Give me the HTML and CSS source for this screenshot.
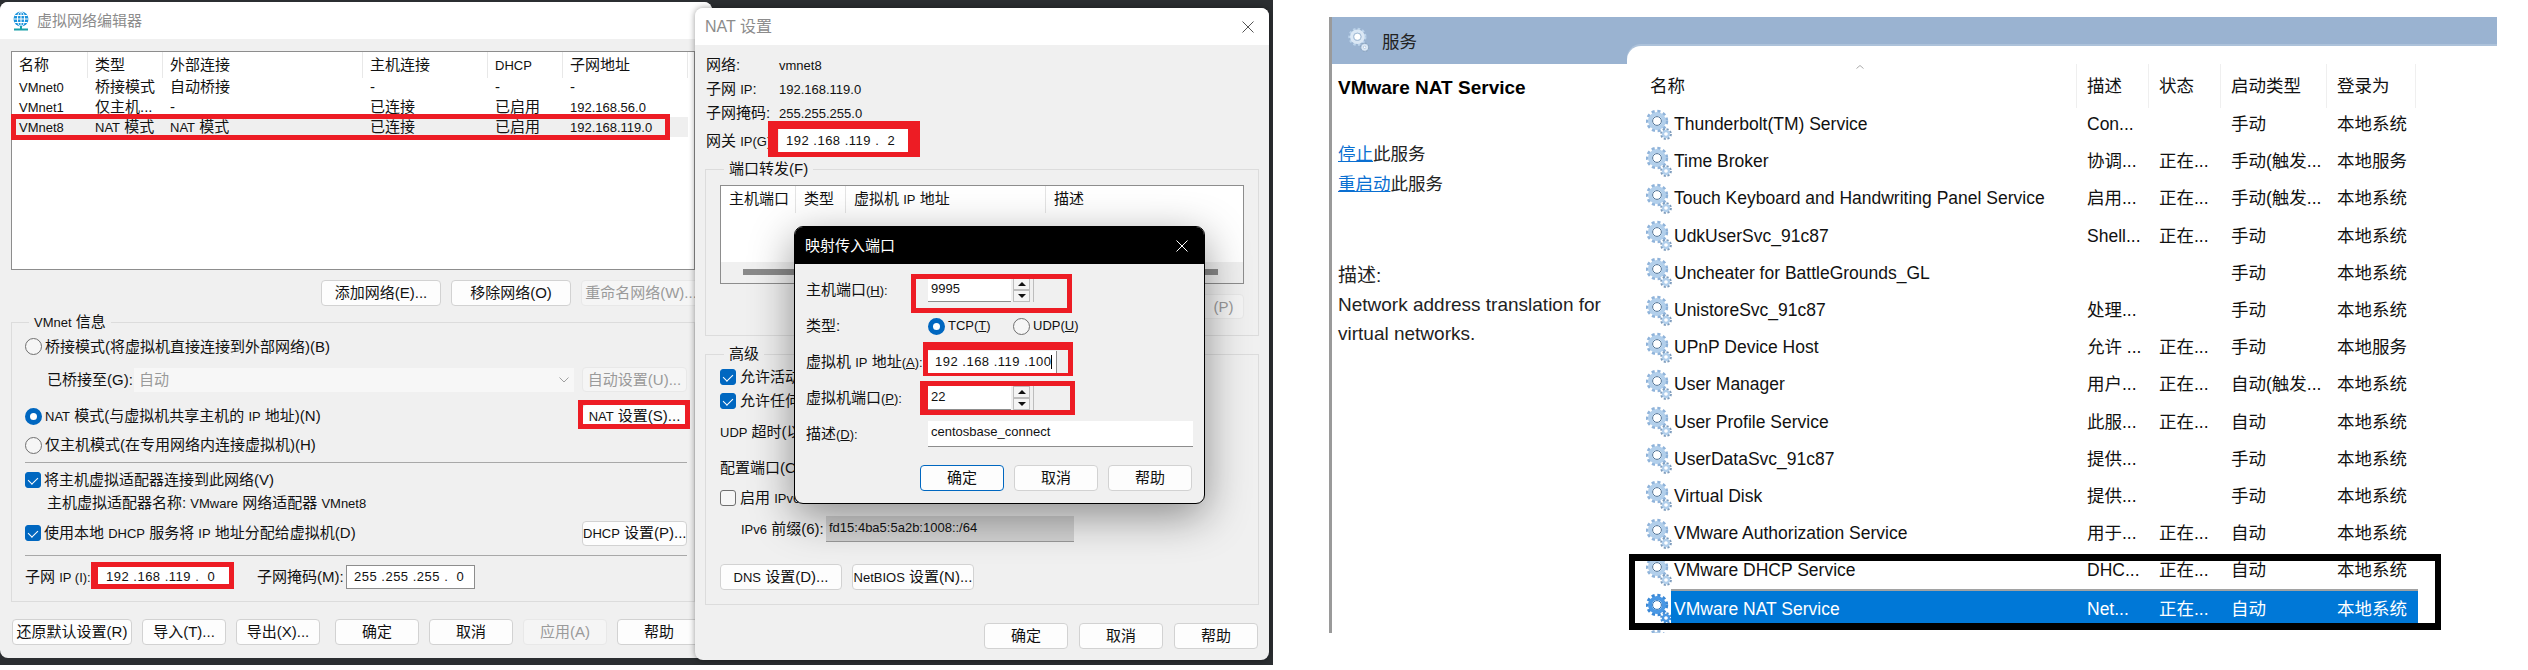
FILE: index.html
```html
<!DOCTYPE html>
<html lang="zh-CN">
<head>
<meta charset="utf-8">
<title>VMware NAT</title>
<link rel="stylesheet" href="styles.css">
</head>
<body>
<svg class="defs" width="0" height="0" aria-hidden="true">
  <symbol id="gear" viewBox="0 0 26 32">
    <circle class="g-teeth" cx="11" cy="12" r="9.5" stroke-width="3.4" stroke-dasharray="3 2.6"/>
    <circle class="g-body" cx="11" cy="12" r="7" stroke-width="4"/>
    <circle cx="11" cy="12" r="4.4" fill="#fff"/>
    <circle class="g-hole" cx="11" cy="12" r="4.4" stroke-width="1"/>
    <circle class="g-small" cx="20" cy="25" r="4.6" stroke-width="2.6" stroke-dasharray="2 1.6"/>
    <circle class="g-body" cx="20" cy="25" r="3" stroke-width="2.4"/>
    <circle cx="20" cy="25" r="1.3" fill="#fff"/>
  </symbol>
  <symbol id="x" viewBox="0 0 12 12">
    <path d="M0.5 0.5L11.5 11.5M11.5 0.5L0.5 11.5" fill="none" stroke="currentColor" stroke-width="1"/>
  </symbol>
</svg>

<div class="stage">
  <div class="desktop">

    <section class="win win-editor">
      <header class="title">
        <svg class="globe" viewBox="0 0 18 20" width="18" height="20">
          <circle cx="9" cy="8" r="7.5" fill="#1b93dc"/>
          <path d="M1.5 8H16.5M9 .5V15.500M2.500 4.500H15.500M2.500 11.500H15.500" stroke="#fff" stroke-width="1" fill="none"/>
          <ellipse cx="9" cy="8" rx="3.600" ry="7.500" fill="none" stroke="#fff" stroke-width="1"/>
          <path d="M2 18.500H16" stroke="#18a0a8" stroke-width="2"/>
          <path d="M9 15V18" stroke="#18a0a8" stroke-width="2"/>
        </svg>
        <span>虚拟网络编辑器</span>
      </header>
      <div class="editor-body">
        <div class="netlist">
          <div class="net-row net-head">
            <span>名称</span><span>类型</span><span>外部连接</span><span>主机连接</span><span><i class="l">DHCP</i></span><span>子网地址</span>
          </div>
          <div class="net-row">
            <span><i class="l">VMnet0</i></span><span>桥接模式</span><span>自动桥接</span><span>-</span><span>-</span><span>-</span>
          </div>
          <div class="net-row">
            <span><i class="l">VMnet1</i></span><span>仅主机...</span><span>-</span><span>已连接</span><span>已启用</span><span><i class="l">192.168.56.0</i></span>
          </div>
          <div class="net-row net-sel">
            <span><i class="l">VMnet8</i></span><span><i class="l">NAT</i> 模式</span><span><i class="l">NAT</i> 模式</span><span>已连接</span><span>已启用</span><span><i class="l">192.168.119.0</i></span>
          </div>
        </div>
        <div class="net-actions">
          <button class="btn w120">添加网络(E)...</button>
          <button class="btn w120">移除网络(O)</button>
          <button class="btn w120 off">重命名网络(W)...</button>
        </div>
        <fieldset class="group group-vm">
          <legend><i class="l">VMnet</i> 信息</legend>
          <div class="vm-rows">
            <div class="opt"><span class="radio"></span><span>桥接模式(将虚拟机直接连接到外部网络)(B)</span></div>
            <div class="bridge">
              <span class="bridge-label">已桥接至(G):</span>
              <span class="select">自动<svg class="chev" viewBox="0 0 10 6" width="10" height="6"><path d="M.5 .5L5 5L9.500 .5" fill="none" stroke="#a0a0a0"/></svg></span>
              <button class="btn w105 off">自动设置(U)...</button>
            </div>
            <div class="opt-row">
              <div class="opt"><span class="radio on"></span><span><i class="l">NAT</i> 模式(与虚拟机共享主机的 <i class="l">IP</i> 地址)(N)</span></div>
              <button class="btn w105"><i class="l">NAT</i> 设置(S)...</button>
            </div>
            <div class="opt"><span class="radio"></span><span>仅主机模式(在专用网络内连接虚拟机)(H)</span></div>
            <div class="sep"></div>
            <div class="opt"><span class="check on"></span><span>将主机虚拟适配器连接到此网络(V)</span></div>
            <div class="adapter">主机虚拟适配器名称: <i class="l">VMware</i> 网络适配器 <i class="l">VMnet8</i></div>
            <div class="opt-row">
              <div class="opt"><span class="check on"></span><span>使用本地 <i class="l">DHCP</i> 服务将 <i class="l">IP</i> 地址分配给虚拟机(D)</span></div>
              <button class="btn w105"><i class="l">DHCP</i> 设置(P)...</button>
            </div>
            <div class="sep"></div>
            <div class="subnet">
              <span class="subnet-ip">子网 <i class="l">IP (I):</i></span>
              <span class="ip ip-subnet"><i class="l">192 .168 .119 .&nbsp;&nbsp;0</i></span>
              <span class="subnet-mask">子网掩码(M):</span>
              <span class="ip ip-mask"><i class="l">255 .255 .255 .&nbsp;&nbsp;0</i></span>
            </div>
          </div>
        </fieldset>
        <div class="editor-foot">
          <button class="btn w120">还原默认设置(R)</button>
          <button class="btn w84">导入(T)...</button>
          <button class="btn w84 gap-wide">导出(X)...</button>
          <button class="btn w84">确定</button>
          <button class="btn w84">取消</button>
          <button class="btn w84 off">应用(A)</button>
          <button class="btn w84">帮助</button>
        </div>
      </div>
    </section>

    <section class="win win-nat">
      <header class="title title-nat">
        <span><i class="nat-t">NAT</i> 设置</span>
        <svg class="close" width="12" height="12"><use href="#x"/></svg>
      </header>
      <div class="nat-body">
        <div class="info">
          <span>网络:</span><span><i class="l">vmnet8</i></span>
          <span>子网 <i class="l">IP</i>:</span><span><i class="l">192.168.119.0</i></span>
          <span>子网掩码:</span><span><i class="l">255.255.255.0</i></span>
          <span>网关 <i class="l">IP(G)</i></span><span class="ip ip-gw"><i class="l">192 .168 .119 .&nbsp;&nbsp;2</i></span>
        </div>
        <fieldset class="group group-pf">
          <legend>端口转发(F)</legend>
          <div class="pf-list">
            <div class="pf-head">
              <span>主机端口</span><span>类型</span><span>虚拟机 <i class="l">IP</i> 地址</span><span>描述</span>
            </div>
            <div class="pf-scroll"><div class="pf-thumb"></div></div>
          </div>
          <div class="pf-actions"><button class="btn w105 off pf-btn">(P)</button></div>
        </fieldset>
        <fieldset class="group group-adv">
          <legend>高级</legend>
          <div class="adv-rows">
            <div class="adv-opt"><span class="check on"></span><span>允许活动</span></div>
            <div class="adv-opt"><span class="check on"></span><span>允许任何</span></div>
            <div><i class="l">UDP</i> 超时(以</div>
            <div>配置端口(C)</div>
            <div class="adv-opt"><span class="check"></span><span>启用 <i class="l">IPv6</i></span></div>
            <div class="ipv6"><span class="ipv6-label"><i class="l">IPv6</i> 前缀(6):</span><span class="ipv6-field"><i class="l">fd15:4ba5:5a2b:1008::/64</i></span></div>
          </div>
          <div class="adv-actions">
            <button class="btn w122"><i class="l">DNS</i> 设置(D)...</button>
            <button class="btn w122"><i class="l">NetBIOS</i> 设置(N)...</button>
          </div>
        </fieldset>
        <div class="nat-foot">
          <button class="btn w84">确定</button>
          <button class="btn w84">取消</button>
          <button class="btn w84">帮助</button>
        </div>
      </div>
    </section>

    <section class="win win-map">
      <header class="title title-map">
        <span>映射传入端口</span>
        <svg class="close" width="12" height="12"><use href="#x"/></svg>
      </header>
      <div class="map-body">
        <div class="map-grid">
          <span>主机端口<i class="l">(<u>H</u>):</i></span>
          <div class="spin-field">
            <span class="spin-text"><i class="l">9995</i></span>
            <span class="spin"><b class="up"></b><b class="down"></b></span>
          </div>
          <span>类型:</span>
          <div class="types">
            <span class="type"><span class="radio on"></span><i class="l">TCP(<u>T</u>)</i></span>
            <span class="type"><span class="radio"></span><i class="l">UDP(<u>U</u>)</i></span>
          </div>
          <span>虚拟机 <i class="l">IP</i> 地址<i class="l">(<u>A</u>):</i></span>
          <span class="ip ip-vm"><i class="l">192 .168 .119 .100</i><span class="caret"></span></span>
          <span>虚拟机端口<i class="l">(<u>P</u>):</i></span>
          <div class="spin-field">
            <span class="spin-text"><i class="l">22</i></span>
            <span class="spin"><b class="up"></b><b class="down"></b></span>
          </div>
          <span>描述<i class="l">(<u>D</u>):</i></span>
          <span class="desc-field"><i class="l">centosbase_connect</i></span>
        </div>
        <div class="map-foot">
          <button class="btn w84 primary">确定</button>
          <button class="btn w84">取消</button>
          <button class="btn w84">帮助</button>
        </div>
      </div>
    </section>
  </div>

  <section class="svc">
    <header class="svc-band">
      <svg class="svc-logo" width="24" height="26"><use href="#gear"/></svg>
      <span>服务</span>
    </header>
    <div class="svc-main">
      <aside class="svc-side">
        <div class="svc-tab"></div>
        <h2 class="svc-name">VMware NAT Service</h2>
        <p class="svc-links"><a href="#">停止</a>此服务<br><a href="#">重启动</a>此服务</p>
        <p class="svc-desc">描述:<br>Network address translation for virtual networks.</p>
      </aside>
      <div class="svc-list">
        <div class="svc-cols svc-hdr">
          <span class="hdr-name">名称<svg class="sort" viewBox="0 0 8 4" width="8" height="4"><path d="M.5 3.500L4 .5L7.500 3.500" fill="none" stroke="#aaa"/></svg></span>
          <span>描述</span><span>状态</span><span>启动类型</span><span>登录为</span>
        </div>
        <div class="svc-cols svc-row"><svg class="gear"><use href="#gear"/></svg><span>Thunderbolt(TM) Service</span><span>Con...</span><span></span><span>手动</span><span>本地系统</span></div>
        <div class="svc-cols svc-row"><svg class="gear"><use href="#gear"/></svg><span>Time Broker</span><span>协调...</span><span>正在...</span><span>手动(触发...</span><span>本地服务</span></div>
        <div class="svc-cols svc-row"><svg class="gear"><use href="#gear"/></svg><span>Touch Keyboard and Handwriting Panel Service</span><span>启用...</span><span>正在...</span><span>手动(触发...</span><span>本地系统</span></div>
        <div class="svc-cols svc-row"><svg class="gear"><use href="#gear"/></svg><span>UdkUserSvc_91c87</span><span>Shell...</span><span>正在...</span><span>手动</span><span>本地系统</span></div>
        <div class="svc-cols svc-row"><svg class="gear"><use href="#gear"/></svg><span>Uncheater for BattleGrounds_GL</span><span></span><span></span><span>手动</span><span>本地系统</span></div>
        <div class="svc-cols svc-row"><svg class="gear"><use href="#gear"/></svg><span>UnistoreSvc_91c87</span><span>处理...</span><span></span><span>手动</span><span>本地系统</span></div>
        <div class="svc-cols svc-row"><svg class="gear"><use href="#gear"/></svg><span>UPnP Device Host</span><span>允许 ...</span><span>正在...</span><span>手动</span><span>本地服务</span></div>
        <div class="svc-cols svc-row"><svg class="gear"><use href="#gear"/></svg><span>User Manager</span><span>用户...</span><span>正在...</span><span>自动(触发...</span><span>本地系统</span></div>
        <div class="svc-cols svc-row"><svg class="gear"><use href="#gear"/></svg><span>User Profile Service</span><span>此服...</span><span>正在...</span><span>自动</span><span>本地系统</span></div>
        <div class="svc-cols svc-row"><svg class="gear"><use href="#gear"/></svg><span>UserDataSvc_91c87</span><span>提供...</span><span></span><span>手动</span><span>本地系统</span></div>
        <div class="svc-cols svc-row"><svg class="gear"><use href="#gear"/></svg><span>Virtual Disk</span><span>提供...</span><span></span><span>手动</span><span>本地系统</span></div>
        <div class="svc-cols svc-row"><svg class="gear"><use href="#gear"/></svg><span>VMware Authorization Service</span><span>用于...</span><span>正在...</span><span>自动</span><span>本地系统</span></div>
        <div class="svc-cols svc-row"><svg class="gear"><use href="#gear"/></svg><span>VMware DHCP Service</span><span>DHC...</span><span>正在...</span><span>自动</span><span>本地系统</span></div>
        <div class="svc-cols svc-row svc-sel"><svg class="gear"><use href="#gear"/></svg><span>VMware NAT Service</span><span>Net...</span><span>正在...</span><span>自动</span><span>本地系统</span></div>
        <div class="svc-cols svc-row"><svg class="gear"><use href="#gear"/></svg></div>
      </div>
    </div>
  </section>

  <div class="mark m-net"></div>
  <div class="mark m-natbtn"></div>
  <div class="mark m-subnet"></div>
  <div class="mark m-gw"></div>
  <div class="mark m-host"></div>
  <div class="mark m-vmip"></div>
  <div class="mark m-vmport"></div>
  <div class="mark m-black"></div>
</div>
</body>
</html>
```

FILE: styles.css
```css
* { box-sizing: border-box; }
html, body { margin: 0; padding: 0; }
body {
  width: 2528px;
  height: 670px;
  overflow: hidden;
  background: #fff;
  color: #111;
  font: 15px/20px "Liberation Sans", "Noto Sans CJK SC", sans-serif;
}
i { font-style: normal; }
.l { font-size: 13px; }
.defs { position: absolute; }

.stage { position: relative; display: flex; width: 2528px; height: 670px; }

/* left screenshot */
.desktop {
  position: relative;
  flex: none;
  width: 1273px;
  height: 665px;
  background: #2b2e31;
  overflow: hidden;
}
.win { position: absolute; background: #f0f0f0; overflow: hidden; }
.title { display: flex; align-items: center; background: #fff; color: #8c8c8c; }
.close { color: #555; flex: none; }

.btn {
  display: block;
  height: 26px;
  padding: 0;
  background: #fdfdfd;
  border: 1px solid #d2d2d2;
  border-radius: 4px;
  font: inherit;
  color: #111;
  white-space: pre;
}
.btn.off { background: #f5f5f5; border-color: #e8e8e8; color: #9a9a9a; }
.btn.primary { border-color: #0067c0; }
.w84 { width: 84px; }
.w105 { width: 105px; height: 25px; }
.w120 { width: 120px; }
.w122 { width: 122px; }

.radio {
  display: inline-block;
  flex: none;
  width: 17px;
  height: 17px;
  border: 1px solid #6f6f6f;
  border-radius: 50%;
  background: #f6f6f6;
}
.radio.on { border: 5px solid #0067c0; background: #fff; }
.check {
  position: relative;
  display: inline-block;
  flex: none;
  width: 16px;
  height: 16px;
  border: 1px solid #6f6f6f;
  border-radius: 3px;
  background: #f6f6f6;
}
.check.on { background: #0067c0; border-color: #0067c0; }
.check.on::after {
  content: "";
  position: absolute;
  left: 4px;
  top: 2px;
  width: 5px;
  height: 8px;
  border: solid #fff;
  border-width: 0 1px 1px 0;
  transform: rotate(45deg);
}

.group { margin: 0; padding: 0; min-width: 0; border: 1px solid #dcdcdc; }
.group legend { padding: 0 5px; margin-left: 4px; line-height: 20px; }

.ip {
  display: flex;
  align-items: center;
  background: #fff;
  white-space: pre;
}
.ip .l { letter-spacing: .5px; }

/* network editor */
.win-editor {
  left: 0;
  top: 2px;
  width: 712px;
  height: 656px;
  border-radius: 8px;
}
.win-editor .title { height: 37px; padding-left: 12px; gap: 7px; }
.globe { flex: none; }
.editor-body { padding: 12px 0 0 11px; }
.netlist {
  width: 684px;
  height: 219px;
  background: #fff;
  border: 1px solid #8d8d8d;
}
.net-row {
  display: grid;
  grid-template-columns: 76px 75px 200px 125px 75px 125px;
  height: 20px;
  line-height: 20px;
}
.net-row span { padding-left: 7px; white-space: nowrap; }
.net-head { height: 25px; line-height: 25px; }
.net-head span { border-right: 1px solid #e8e8e8; }
.net-sel { background: #efefef; width: 676px; }
.net-actions { display: flex; gap: 10px; margin: 10px 0 0 310px; }
.group-vm {
  width: 684px;
  height: 290px;
  margin-top: 6px;
  padding: 0 7px 0 13px;
}
.vm-rows {
  display: grid;
  grid-template-rows: 27px 39px 34px 24px 10px 26px 20px 40px 4px 40px;
  align-items: center;
}
.opt { display: flex; align-items: center; gap: 3px; white-space: pre; }
.opt-row { display: flex; align-items: center; justify-content: space-between; }
.bridge { display: flex; align-items: center; padding-left: 22px; }
.bridge-label { width: 87px; }
.select {
  display: flex;
  align-items: center;
  justify-content: space-between;
  width: 440px;
  height: 24px;
  padding: 0 5px;
  margin-right: 8px;
  background: #f7f7f7;
  color: #9a9a9a;
}
.adapter { padding-left: 22px; white-space: pre; }
.sep { height: 1px; background: #a8a8a8; }
.subnet { display: flex; align-items: center; white-space: pre; }
.subnet-ip { width: 72px; }
.subnet-mask { width: 89px; margin-left: 25px; }
.ip-subnet { width: 135px; height: 24px; padding-left: 8px; border: 1px solid #8d8d8d; }
.ip-mask { width: 129px; height: 24px; padding-left: 7px; border: 1px solid #8d8d8d; }
.editor-foot { display: flex; gap: 10px; margin: 17px 0 0 1px; }
.gap-wide { margin-right: 5px; }

/* NAT settings */
.win-nat {
  left: 695px;
  top: 8px;
  width: 574px;
  height: 652px;
  border-radius: 8px;
  box-shadow: 0 0 6px rgba(0, 0, 0, .4);
}
.title-nat {
  height: 37px;
  padding: 0 15px 0 10px;
  justify-content: space-between;
  font-size: 16px;
}
.nat-t { font-size: 16px; }
.nat-body { padding: 0 0 0 10px; }
.info {
  display: grid;
  grid-template-columns: 73px 1fr;
  grid-template-rows: 8px 24px 24px 24px 32px;
  align-items: center;
  padding-left: 1px;
}
.info::before { content: ""; grid-column: 1 / 3; }
.ip-gw { width: 130px; height: 24px; padding-left: 7px; }
.group-pf { width: 554px; height: 177px; margin-top: 2px; padding: 6px 14px 0; }
.pf-list {
  display: flex;
  flex-direction: column;
  justify-content: space-between;
  height: 99px;
  background: #fff;
  border: 1px solid #8d8d8d;
}
.pf-head {
  display: grid;
  grid-template-columns: 75px 50px 200px 1fr;
  height: 26px;
  line-height: 26px;
}
.pf-head span { padding-left: 8px; border-right: 1px solid #e4e4e4; white-space: pre; }
.pf-head span:last-child { border-right: 0; }
.pf-scroll { height: 21px; padding: 7px 25px 0 22px; background: #f0f0f0; }
.pf-thumb { height: 6px; background: #8a8a8a; }
.pf-actions { display: flex; justify-content: flex-end; margin-top: 10px; }
.pf-btn { padding-left: 64px; }
.group-adv { width: 554px; height: 261px; margin-top: 8px; padding: 0 14px; }
.adv-rows {
  display: grid;
  grid-template-rows: 26px 22px 40px 32px 28px 34px;
  align-items: center;
}
.adv-opt { display: flex; align-items: center; gap: 4px; white-space: pre; }
.ipv6 { display: flex; align-items: center; padding-left: 21px; }
.ipv6-label { width: 85px; white-space: pre; }
.ipv6-field {
  display: block;
  width: 248px;
  height: 26px;
  padding: 1px 3px;
  background: #d3d3d3;
  border-bottom: 1px solid #9a9a9a;
}
.adv-actions { display: flex; gap: 10px; margin-top: 18px; }
.nat-foot { display: flex; justify-content: flex-end; gap: 11px; margin: 18px 11px 0 0; }

/* port mapping */
.win-map {
  left: 794px;
  top: 226px;
  width: 411px;
  height: 278px;
  border: 1px solid #000;
  border-radius: 9px;
  box-shadow: 0 12px 44px rgba(0, 0, 0, .42);
}
.title-map {
  height: 37px;
  padding: 0 16px 0 10px;
  justify-content: space-between;
  background: #000;
  color: #fff;
}
.title-map .close { color: #fff; }
.map-body { padding: 8px 11px 0; }
.map-grid {
  display: grid;
  grid-template-columns: 122px 1fr;
  grid-auto-rows: 36px;
  align-items: center;
  white-space: pre;
}
.spin-field { display: flex; width: 106px; height: 24px; }
.spin-text {
  width: 83px;
  padding-left: 3px;
  background: #fff;
  border-bottom: 1px solid #8d8d8d;
}
.spin {
  display: flex;
  flex-direction: column;
  width: 23px;
  padding: 0 3px 0 2px;
  border-right: 1px solid #bdbdbd;
}
.spin b { position: relative; flex: 1; background: #f4f4f4; border: 1px solid #bdbdbd; }
.spin b::after {
  content: "";
  position: absolute;
  left: 4px;
  top: 3px;
  border: 4px solid transparent;
  border-top: 0;
  border-bottom: 4px solid #111;
}
.spin .down::after { border-bottom: 0; border-top: 4px solid #111; }
.types { display: flex; gap: 0; }
.type { display: flex; align-items: center; gap: 3px; width: 85px; }
.ip-vm { width: 129px; height: 23px; padding-left: 7px; border-right: 1px solid #8d8d8d; border-bottom: 1px solid #8d8d8d; }
.caret { width: 1px; height: 14px; background: #000; }
.desc-field {
  width: 265px;
  height: 26px;
  padding: 0 3px;
  background: #fff;
  border-bottom: 1px solid #8d8d8d;
}
.map-foot { display: flex; justify-content: flex-end; gap: 10px; margin: 13px 1px 0 0; }

/* services */
.svc {
  width: 1168px;
  height: 616px;
  margin: 17px 0 0 56px;
  overflow: hidden;
  border-left: 3px solid #9a9a9a;
  font-size: 17.5px;
}
.svc-band {
  position: relative;
  z-index: 1;
  display: flex;
  align-items: flex-start;
  gap: 11px;
  height: 29px;
  padding: 10px 0 0 15px;
  background: #9ab3d1;
  color: #222;
}
.svc-logo {
  flex: none;
  --g1: #bcd3ea;
  --g2: #dbe8f5;
  --g3: #9fb9d4;
  --g4: #8fa7c0;
}
.svc-band span { margin-top: 3px; line-height: 24px; }
.svc-main { display: flex; }
.svc-side { flex: none; width: 295px; }
.svc-tab { width: 310px; height: 18px; background: #9ab3d1; }
.svc-name { margin: 12px 0 0 6px; font-size: 19px; line-height: 24px; font-weight: bold; color: #000; white-space: nowrap; }
.svc-links { margin: 39px 0 0 6px; line-height: 30px; color: #222; }
.svc-links a { color: #0a6fd1; }
.svc-desc { margin: 62px 0 0 6px; width: 285px; line-height: 29px; font-size: 19px; color: #222; }
.svc-list {
  position: relative;
  z-index: 2;
  flex: 1;
  background: #fff;
  border-top-left-radius: 14px;
  box-shadow: 0 -2px 0 #adc2da;
}
.svc-cols {
  display: grid;
  grid-template-columns: 44px 406px 72px 72px 106px 91px;
  width: 791px;
}
.svc-hdr {
  grid-template-columns: 450px 72px 72px 106px 89px;
  height: 42px;
  margin-top: 18px;
  line-height: 44px;
}
.svc-hdr span { padding-left: 10px; border-right: 1px solid #efefef; }
.svc-hdr .hdr-name { position: relative; padding-left: 23px; }
.sort { position: absolute; left: 229px; top: 1px; }
.svc-row { height: 37.2px; line-height: 37px; align-items: center; }
.svc-row span { padding-left: 10px; white-space: nowrap; }
.svc-row span:nth-of-type(1) { padding-left: 3px; }
.gear {
  width: 26px;
  height: 32px;
  margin-left: 19px;
  --g1: #8fb3da;
  --g2: #b2cfeb;
  --g3: #4f7499;
  --g4: #7f9dbd;
}
.g-teeth, .g-body, .g-hole, .g-small { fill: none; }
.g-teeth { stroke: var(--g1); }
.g-body { stroke: var(--g2); }
.g-hole { stroke: var(--g3); }
.g-small { stroke: var(--g4); }
.svc-sel { color: #fff; }
.svc-sel .gear { --g1: #3a88d6; --g2: #4a98e4; --g3: #2a6eb4; --g4: #4a8fd0; }
.svc-sel span { height: 100%; background: #0078d7; border-top: 2px solid #a2a2a2; }

/* annotation frames */
.mark { position: absolute; z-index: 3; border: 5px solid #ed1c24; pointer-events: none; }
.m-net { left: 11px; top: 114px; width: 659px; height: 26px; }
.m-natbtn { left: 578px; top: 400px; width: 112px; height: 29px; }
.m-subnet { left: 91px; top: 562px; width: 143px; height: 27px; border-left-width: 7px; }
.m-gw { left: 768px; top: 121px; width: 152px; height: 36px; border-width: 8px 12px 5px 10px; }
.m-host { left: 911px; top: 274px; width: 161px; height: 39px; }
.m-vmip { left: 923px; top: 342px; width: 150px; height: 34px; border-width: 8px 5px 3px 5px; }
.m-vmport { left: 920px; top: 381px; width: 155px; height: 34px; border-left-width: 8px; }
.m-black { left: 1629px; top: 554px; width: 812px; height: 76px; border: solid #000; border-width: 7px 6px; }
```
